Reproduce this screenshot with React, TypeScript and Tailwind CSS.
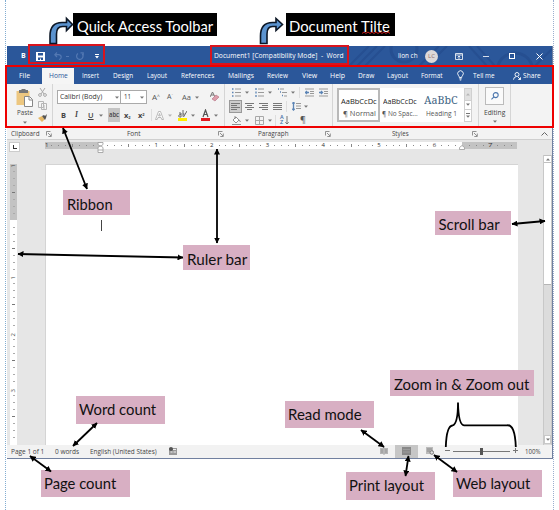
import { useLayoutEffect, useRef, useState } from 'react';
import type { ReactNode } from 'react';

/** Single line of text that is condensed or widened to fill its box. */
function Fit({ className = '', children }: { className?: string; children: ReactNode }) {
  const box = useRef<HTMLSpanElement>(null);
  const text = useRef<HTMLSpanElement>(null);
  const [scale, setScale] = useState(1);
  useLayoutEffect(() => {
    if (box.current && text.current) setScale(box.current.clientWidth / text.current.offsetWidth);
  }, []);
  return (
    <span ref={box} className={`block shrink-0 whitespace-nowrap ${className}`}>
      <span ref={text} className="inline-block origin-left" style={{ transform: `scaleX(${scale})` }}>
        {children}
      </span>
    </span>
  );
}

function Chevron({ className = '' }: { className?: string }) {
  return (
    <svg className={`h-[3px] w-[4px] shrink-0 ${className}`} viewBox="0 0 4 3">
      <path d="M0 .5h4L2 2.7z" fill="#777" />
    </svg>
  );
}

function Launcher({ className = '' }: { className?: string }) {
  return (
    <svg className={`h-[6px] w-[6px] shrink-0 ${className}`} viewBox="0 0 6 6" fill="none" stroke="#777" strokeWidth=".8">
      <path d="M.5 4.5v-4h4M2 2l3 3M5.3 2.5v3h-3" />
    </svg>
  );
}

function Lines({ className = '', d }: { className?: string; d: string }) {
  return (
    <svg className={`h-[9px] w-[9px] shrink-0 ${className}`} viewBox="0 0 9 9" stroke="#777" strokeWidth="1" fill="none">
      <path d={d} />
    </svg>
  );
}

function List({ className = '', d, marks }: { className?: string; d: string; marks: string }) {
  return (
    <svg className={`h-[9px] w-[9px] shrink-0 ${className}`} viewBox="0 0 9 9" fill="none">
      <path d={d} stroke="#999" />
      <path d={marks} stroke="#5b84b5" strokeWidth="1.3" />
    </svg>
  );
}

const tabs = [
  ['File', 'ml-[12px] w-[11px]'],
  ['Home', 'ml-[12px] w-[32px] px-[7px]'],
  ['Insert', 'ml-[8px] w-[17px]'],
  ['Design', 'ml-[14px] w-[20px]'],
  ['Layout', 'ml-[14px] w-[20px]'],
  ['References', 'ml-[14px] w-[33px]'],
  ['Mailings', 'ml-[14px] w-[26px]'],
  ['Review', 'ml-[13px] w-[21px]'],
  ['View', 'ml-[14px] w-[15px]'],
  ['Help', 'ml-[13px] w-[15px]'],
  ['Draw', 'ml-[13px] w-[16px]'],
  ['Layout', 'ml-[13px] w-[21px]'],
  ['Format', 'ml-[13px] w-[22px]'],
];

function TitleBar() {
  return (
    <div className="relative flex h-[20px] items-center overflow-hidden bg-[#2b579a] text-[7px] leading-[20px] text-white">
      <svg className="absolute left-[340px] top-0 h-[20px] w-[205px]" viewBox="0 0 205 20" fill="none" stroke="#264f91">
        <path d="M2 20 22 0M10 20 30 0M18 20 38 0M72 20 92 0M80 20 100 0M122 0l18 20M130 0l18 20M188 20 205 3" strokeWidth="2" />
        <circle cx="57" cy="3" r="13" strokeWidth="3" />
        <circle cx="168" cy="25" r="18" strokeWidth="3" />
      </svg>
      <span className="ml-[14px] w-[5px] font-bold">B</span>
      <svg className="ml-[10px] h-[9px] w-[9px] shrink-0" viewBox="0 0 9 9">
        <path d="M0 0h9v9H0z" fill="#fff" />
        <path d="M2 1h5v2.5H2zM2 5.5h5V8H5V6.5H4V8H2z" fill="#2b579a" />
      </svg>
      <svg className="ml-[9px] h-[8px] w-[8px] shrink-0" viewBox="0 0 8 8" fill="none" stroke="#5378b3" strokeWidth="1.2">
        <path d="M3 .5.8 2.7 3 5M1 2.7h3.5Q7.3 3 7.2 5.2 7 7 5 7.5" />
      </svg>
      <span className="ml-[4px] h-px w-[3px] bg-[#5378b3]" />
      <svg className="ml-[7px] h-[8px] w-[8px] shrink-0" viewBox="0 0 8 8" fill="none" stroke="#5378b3" strokeWidth="1.2">
        <path d="M2 1.5A3.2 3.2 0 1 0 6.2 2M4.5.8h2.7v2.7" />
      </svg>
      <svg className="ml-[11px] h-[5px] w-[4px] shrink-0" viewBox="0 0 4 5" fill="#fff">
        <path d="M0 0h4v1H0zM0 2h4L2 4.5z" />
      </svg>
      <Fit className="relative ml-[115px] w-[130px]">Document1 [Compatibility Mode]&nbsp; - &nbsp;Word</Fit>
      <Fit className="relative ml-[54px] w-[20px]">lion ch</Fit>
      <span className="relative ml-[7px] h-[13px] w-[13px] shrink-0 rounded-full bg-[#ddd8d8] text-center text-[6px] leading-[13px] text-[#8d6f6f]">LC</span>
      <svg className="relative ml-[17px] h-[7px] w-[8px] shrink-0" viewBox="0 0 8 7" fill="none" stroke="#fff">
        <path d="M.5.5h7v6h-7zM.5 2h7M4 6V3M2.7 4.3 4 3l1.3 1.3" strokeWidth=".8" />
      </svg>
      <span className="relative ml-[20px] h-px w-[6px] shrink-0 bg-[#d5deec]" />
      <span className="relative ml-[20px] h-[6px] w-[6px] shrink-0 border border-white" />
      <svg className="relative ml-[21px] h-[7px] w-[7px] shrink-0" viewBox="0 0 7 7" stroke="#fff" fill="none">
        <path d="m.5.5 6 6m0-6-6 6" />
      </svg>
    </div>
  );
}

function TabRow() {
  return (
    <div className="relative flex h-[18px] bg-[#2b579a] pt-[2px] text-[7px] leading-[15px] text-white">
      {tabs.map(([label, place], i) =>
        label === 'Home' ? (
          <div key={i} className={`h-[16px] shrink-0 bg-[#f5f5f5] text-[#2b579a] ${place}`}>
            <Fit className="w-[19px]">{label}</Fit>
          </div>
        ) : (
          <Fit key={i} className={place}>{label}</Fit>
        ),
      )}
      <svg className="ml-[14px] mt-[2px] h-[11px] w-[7px] shrink-0" viewBox="0 0 7 11" fill="none" stroke="#fff" strokeWidth=".9">
        <path d="M2.3 7.5Q2.3 6.3 1.3 5.3A2.8 2.8 0 1 1 5.7 5.3Q4.7 6.3 4.7 7.5zM2.3 8.8h2.4M2.8 10h1.4" />
      </svg>
      <Fit className="ml-[9px] w-[22px]">Tell me</Fit>
      <svg className="ml-[18px] mt-[4px] h-[8px] w-[8px] shrink-0" viewBox="0 0 8 8" fill="none" stroke="#fff" strokeWidth=".9">
        <circle cx="4" cy="2.5" r="2" />
        <path d="M.5 7.7Q.7 5 3 4.7M5 5l2.5 2.5M5.3 7.5h2.2V5.3" />
      </svg>
      <Fit className="ml-[2px] w-[18px]">Share</Fit>
    </div>
  );
}

function Clipboard() {
  return (
    <div className="flex w-[46px] shrink-0 border-r border-[#d5d5d5]">
      <div className="ml-[9px] flex w-[17px] flex-col items-center pt-[5px]">
        <svg className="h-[18px] w-[17px] shrink-0" viewBox="0 0 17 18">
          <path d="M.5 2h13v14H.5z" fill="#edc780" />
          <path d="M3 1h2l1-1h3l1 1h2v3H3z" fill="#777" />
          <path d="M8.500 7.500h5l3 3v7h-8z" fill="#fff" stroke="#888" />
          <path d="M13 7.500V11h3.500" fill="none" stroke="#888" />
        </svg>
        <Fit className="w-[16px] text-[7px] leading-[11px] text-[#444]">Paste</Fit>
        <Chevron className="mt-[3px]" />
      </div>
      <div className="ml-[5px] flex flex-col gap-[4px] pt-[4px]">
        <svg className="h-[9px] w-[9px]" viewBox="0 0 9 9" fill="none" stroke="#aaa">
          <path d="m2 0 4 6M7 0 3 6" />
          <circle cx="2" cy="7" r="1.4" /><circle cx="7" cy="7" r="1.4" />
        </svg>
        <svg className="h-[9px] w-[9px]" viewBox="0 0 9 9" fill="#f5f5f5" stroke="#b5b5b5">
          <path d="M.5.5h5v6h-5zM3.500 2.500h5v6h-5zM5 5h2M5 7h2" />
        </svg>
        <svg className="h-[9px] w-[9px]" viewBox="0 0 9 9">
          <path d="M0 4 4 2l3 3-3 3z" fill="#e5b866" />
          <path d="m4 2 2-1 1 1 2-2-1 4-1 2z" fill="#555" />
        </svg>
      </div>
    </div>
  );
}

function FontGroup() {
  return (
    <div className="w-[172px] shrink-0 border-r border-[#d5d5d5]">
      <div className="flex items-center pt-[6px]">
        <div className="ml-[4px] flex h-[14px] w-[64px] shrink-0 items-center border border-[#aaa] bg-white">
          <Fit className="ml-[2px] w-[42px] text-[7px] leading-[12px] text-[#333]">Calibri (Body)</Fit>
          <Chevron className="ml-[13px]" />
        </div>
        <div className="flex h-[14px] w-[26px] shrink-0 items-center border border-l-0 border-[#aaa] bg-white">
          <Fit className="ml-[3px] w-[7px] text-[7px] leading-[12px] text-[#333]">11</Fit>
          <Chevron className="ml-[9px]" />
        </div>
        <span className="ml-[5px] w-[9px] text-[8px] leading-[14px] text-[#555]">A<sup className="text-[5px]">^</sup></span>
        <span className="ml-[6px] w-[8px] text-[7px] leading-[14px] text-[#555]">A<sup className="text-[4px]">ˇ</sup></span>
        <Fit className="ml-[7px] w-[9px] text-[7.5px] leading-[14px] text-[#555]">Aa</Fit>
        <Chevron className="ml-[4px]" />
        <svg className="ml-[11px] h-[10px] w-[9px] shrink-0" viewBox="0 0 9 10" fill="none">
          <path d="M0 5 2.500 0 5 5M1 3h3" stroke="#777" /><path d="m2 7 4-4 3 2-4 4z" fill="#dc9dab" stroke="#b46d7f" strokeWidth=".6" />
        </svg>
      </div>
      <div className="mt-[4px] flex h-[14px] items-center text-[7.5px] leading-[14px] text-[#444]">
        <span className="ml-[8px] w-[5px] font-bold">B</span>
        <span className="ml-[9px] w-[4px] font-['Liberation_Serif'] font-bold italic">I</span>
        <span className="ml-[9px] w-[5px] font-semibold underline">U</span>
        <Chevron className="ml-[6px]" />
        <div className="ml-[5px] flex h-[14px] w-[12px] shrink-0 justify-center bg-[#c5c5c5]">
          <Fit className="w-[10px] text-[6.5px] font-semibold line-through">abc</Fit>
        </div>
        <span className="ml-[4px] w-[8px] whitespace-nowrap font-bold">x<sub className="text-[4px]">2</sub></span>
        <span className="ml-[6px] w-[7px] whitespace-nowrap font-bold">x<sup className="text-[4px]">2</sup></span>
        <span className="ml-[6px] h-[12px] w-px bg-[#ddd]" />
        <svg className="ml-[3px] h-[9px] w-[9px] shrink-0" viewBox="0 0 9 9" fill="#fff" stroke="#aaa" strokeWidth=".8">
          <path d="M.5 8.500 3.500.5h2l3 8H6.800L6 6.500H3l-.8 2zM3.600 5h1.800L4.500 2.500z" />
        </svg>
        <Chevron className="ml-[4px] opacity-50" />
        <svg className="ml-[6px] h-[12px] w-[9px] shrink-0" viewBox="0 0 9 12" fill="none">
          <path d="M0 9h9v3H0z" fill="#ffed00" /><path d="M1 4h2v4H1.300A1.200 1.200 0 0 1 3 5.800M5 1v6.500M5 5h1.500M5.500 8 9 2" stroke="#666" />
        </svg>
        <Chevron className="ml-[4px]" />
        <svg className="ml-[6px] h-[12px] w-[9px] shrink-0" viewBox="0 0 9 12" fill="none">
          <path d="M0 9h9v3H0z" fill="#e21b22" /><path d="M2 8 4.500 1 7 8M3 5.500h3" stroke="#555" strokeWidth="1.200" />
        </svg>
        <Chevron className="ml-[4px]" />
      </div>
    </div>
  );
}

function ParagraphGroup() {
  return (
    <div className="w-[108px] shrink-0 border-r border-[#d5d5d5] pt-[3px]">
      <div className="flex h-[10px] items-center">
        <List className="ml-[7px]" d="M3 1h6M3 4.500h6M3 8h6" marks="M0 1h1.500M0 4.500h1.500M0 8h1.500" />
        <Chevron className="ml-[4px]" />
        <List className="ml-[6px]" d="M3 1h6M3 4.500h6M3 8h6" marks="M1 0v2M1 3.500v2M1 7v2" />
        <Chevron className="ml-[4px]" />
        <List className="ml-[6px]" d="M2 1h4M4 4.500h5M6 8h3" marks="M0 1h1M2 4h1M4 7.500h1" />
        <Chevron className="ml-[4px]" />
        <span className="ml-[4px] h-[11px] w-px bg-[#ddd]" />
        <List className="ml-[5px]" d="M0 1h9M5 3.500h4M5 5.500h4M0 8h9" marks="M4 4.500H.5M2 3 .5 4.500 2 6" />
        <List className="ml-[5px]" d="M0 1h9M5 3.500h4M5 5.500h4M0 8h9" marks="M0 4.500h3.500M2 3l1.500 1.500L2 6" />
      </div>
      <div className="mt-[3px] flex h-[13px] items-center">
        <div className="ml-[4px] flex h-[13px] w-[13px] shrink-0 items-center justify-center border border-[#999] bg-[#cdcdcd]">
          <Lines d="M0 1.500h9M0 3.500h6M0 5.500h9M0 7.500h6" />
        </div>
        <Lines className="ml-[3px]" d="M0 1.500h9M2 3.500h5M0 5.500h9M2 7.500h5" />
        <Lines className="ml-[5px]" d="M0 1.500h9M3 3.500h6M0 5.500h9M3 7.500h6" />
        <Lines className="ml-[5px]" d="M0 1.500h9M0 3.500h9M0 5.500h9M0 7.500h9" />
        <span className="ml-[4px] h-[11px] w-px bg-[#ddd]" />
        <List className="ml-[5px]" d="M4 1.500h5M4 4h5M4 6.500h5" marks="M1.500 0v8M.3 1.500 1.500.3l1.200 1.200M.3 6.800l1.200 1.200 1.200-1.200" />
        <Chevron className="ml-[3px]" />
      </div>
      <div className="mt-px flex h-[12px] items-center">
        <svg className="ml-[7px] h-[9px] w-[9px] shrink-0" viewBox="0 0 9 9" fill="#fff" stroke="#777" strokeWidth=".8">
          <path d="m1 4 3-3 3 3-3 3zM3 3V0M7 4q2 1 1 2M0 8.500h9" />
        </svg>
        <Chevron className="ml-[4px]" />
        <Lines className="ml-[6px] opacity-60" d="M.5.5h8v8h-8zM4.500.5v8M.5 4.500h8" />
        <Chevron className="ml-[4px]" />
        <span className="ml-[3px] h-[11px] w-px bg-[#ddd]" />
        <div className="ml-[4px] w-[5px] text-[5.5px] font-semibold leading-[5px] text-[#456fa8]">A<br />Z</div>
        <Lines className="-ml-px" d="M3 0v8M1.300 6.300 3 8l1.700-1.700" />
        <span className="ml-[7px] text-[9px] leading-[12px] text-[#555]">¶</span>
      </div>
    </div>
  );
}

function StylesGroup() {
  return (
    <div className="flex w-[146px] shrink-0 border-r border-[#d5d5d5] pt-[4px]">
      <div className="ml-[4px] flex h-[34px] w-[135px] bg-white text-[7px]">
        <div className="h-[34px] w-[43px] shrink-0 border-2 border-[#b9b9b9] pl-[2px] pt-[5px] text-[#222]">
          <Fit className="w-[36px] text-[7.5px] leading-[12px]">AaBbCcDc</Fit>
          <Fit className="ml-[2px] mt-[2px] w-[33px] leading-[10px] text-[#555]">¶ Normal</Fit>
        </div>
        <div className="ml-[3px] w-[36px] shrink-0 pt-[7px] text-[#222]">
          <Fit className="w-[34px] text-[7.5px] leading-[12px]">AaBbCcDc</Fit>
          <Fit className="-ml-px mt-[2px] w-[36px] leading-[10px] text-[#555]">¶ No Spac...</Fit>
        </div>
        <div className="ml-[5px] w-[35px] shrink-0 pt-[5px]">
          <Fit className="w-[34px] font-['Noto_Serif','Noto_Sans',serif] text-[11px] leading-[14px] text-[#3f6685]">AaBbC</Fit>
          <Fit className="ml-[2px] mt-[2px] w-[31px] leading-[10px] text-[#555]">Heading 1</Fit>
        </div>
        <div className="ml-[5px] flex w-[8px] flex-col border border-[#d0d0d0]">
          <span className="flex h-[11px] items-center justify-center bg-[#e1e1e1]"><Chevron className="rotate-180 opacity-40" /></span>
          <span className="flex h-[11px] items-center justify-center border-y border-[#d0d0d0]"><Chevron /></span>
          <span className="flex h-[11px] flex-col items-center justify-center"><span className="mb-px h-px w-[4px] bg-[#777]" /><Chevron /></span>
        </div>
      </div>
    </div>
  );
}

function Editing() {
  return (
    <div className="flex w-[32px] shrink-0 flex-col items-center border-r border-[#d5d5d5] pt-[3px]">
      <div className="flex h-[18px] w-[19px] items-center justify-center border border-[#bbb] bg-[#fafafa]">
        <svg className="h-[8px] w-[8px]" viewBox="0 0 9 9" fill="none" stroke="#4b76ad" strokeWidth="1.200">
          <circle cx="5.300" cy="3.500" r="2.800" /><path d="M3.300 5.500.5 8.300" />
        </svg>
      </div>
      <Fit className="mt-[2px] w-[21px] text-[7px] leading-[11px] text-[#444]">Editing</Fit>
      <Chevron className="mt-[2px]" />
    </div>
  );
}

function Ribbon() {
  return (
    <div className="h-[56px] border-b border-[#cfcfcf] bg-[#f3f3f3]">
      <div className="flex h-[44px]">
        <Clipboard /><FontGroup /><ParagraphGroup /><StylesGroup /><Editing />
      </div>
      <div className="flex h-[11px] items-center text-[6.5px] leading-[11px] text-[#444]">
        <Fit className="ml-[4px] w-[29px]">Clipboard</Fit>
        <Launcher className="ml-[6px]" />
        <Fit className="ml-[75px] w-[14px]">Font</Fit>
        <Launcher className="ml-[77px]" />
        <Fit className="ml-[34px] w-[31px]">Paragraph</Fit>
        <Launcher className="ml-[36px]" />
        <Fit className="ml-[61px] w-[17px]">Styles</Fit>
        <Launcher className="ml-[63px]" />
        <svg className="ml-[63px] h-[4px] w-[7px] shrink-0" viewBox="0 0 7 4" fill="none" stroke="#666"><path d="m.5 3.500 3-3 3 3" /></svg>
      </div>
    </div>
  );
}

const eighths = [1, 2, 3, 4, 5, 6, 7];

function Inch({ label, gray = false, flush = false }: { label: string; gray?: boolean; flush?: boolean }) {
  return (
    <div className={`flex h-[7px] w-[55.7px] shrink-0 items-center ${gray ? 'bg-[#c3c3c3]' : 'bg-white'}`}>
      <span className="flex w-[3.48px] shrink-0 justify-start text-[6px] leading-[7px] text-[#333]">
        <span className={flush ? 'font-medium' : '-ml-[2px] font-medium'}>{label}</span>
      </span>
      {eighths.map((n) => (
        <span key={n} className="flex w-[6.96px] shrink-0 justify-center">
          <span className={n === 4 ? 'h-[3px] w-px bg-[#888]' : 'h-px w-px bg-[#888]'} />
        </span>
      ))}
    </div>
  );
}

function VInch({ label, gray = false }: { label: string; gray?: boolean }) {
  return (
    <div className={`flex w-[7px] shrink-0 flex-col items-center ${gray ? 'h-[56px] bg-[#c3c3c3]' : 'h-[56.3px] bg-white'}`}>
      <span className="h-[3.5px] shrink-0 -rotate-90 text-[6px] font-medium leading-[3.5px] text-[#444]">{label}</span>
      {eighths.map((n) => (
        <span key={n} className="flex h-[7.03px] shrink-0 items-center">
          <span className={n === 4 ? 'h-px w-[3px] bg-[#777]' : 'h-px w-[2px] bg-[#aaa]'} />
        </span>
      ))}
    </div>
  );
}

function Workspace() {
  return (
    <div className="flex h-[305px] flex-col bg-[#e6e6e6]">
      <div className="flex h-[13px] shrink-0 pt-[2px]">
        <div className="ml-[2px] flex h-[10px] w-[11px] shrink-0 items-center justify-center border border-[#ccc] bg-white">
          <span className="h-[4px] w-[4px] border-b border-l border-[#333]" />
        </div>
        <div className="relative ml-[25px] flex h-[7px] w-[472px] overflow-hidden">
          <Inch label="1" gray flush /><Inch label="" /><Inch label="1" /><Inch label="2" /><Inch label="3" />
          <Inch label="4" /><Inch label="5" /><Inch label="6" />
          <div className="absolute left-[417px] top-0 h-[7px] w-[55px] bg-[#c3c3c3]">
            <Fit className="ml-[26px] w-[4px] text-[6px] font-medium leading-[7px] text-[#333]">7</Fit>
            <svg className="absolute left-0 top-0 h-[7px] w-[55px]" viewBox="0 0 55 7" stroke="#888" strokeWidth="1">
              <path d="M7 3.500h1M14 3.500h1M21 3.500h1M35 3.500h1M42 3.500h1M49 3.500h1" />
            </svg>
          </div>
        </div>
      </div>
      <div className="flex min-h-0 flex-1">
        <div className="ml-[3px] mt-[11px] h-[281px] w-[7px] shrink-0 overflow-hidden">
          <VInch label="1" gray /><VInch label="" /><VInch label="1" /><VInch label="2" /><VInch label="3" />
        </div>
        <div className="ml-[28px] mt-[11px] h-[281px] w-[473px] shrink-0 border-l border-t border-[#d4d4d4] bg-white pl-[55px] pt-[55px]">
          <div className="h-[11px] w-px bg-[#444]" />
        </div>
        <div className="ml-[25px] mt-[2px] flex w-[9px] shrink-0 flex-col border-x border-[#c8c8c8] bg-[#dcdcdc]">
          <span className="flex h-[8px] shrink-0 items-center justify-center border-y border-[#c0c0c0] bg-white"><Chevron className="rotate-180" /></span>
          <span className="h-[122px] border-b border-[#b5b5b5] bg-white" />
          <span className="mb-px mt-auto flex h-[9px] items-center justify-center border border-[#c8c8c8] bg-white"><Chevron /></span>
        </div>
      </div>
    </div>
  );
}

function StatusBar() {
  return (
    <div className="flex h-[13px] items-center bg-[#f2f2f2] text-[6.5px] leading-[13px] text-[#444]">
      <Fit className="ml-[4px] w-[33px]">Page 1 of 1</Fit>
      <Fit className="ml-[11px] w-[24px]">0 words</Fit>
      <Fit className="ml-[11px] w-[67px]">English (United States)</Fit>
      <svg className="-mt-[2px] ml-[12px] h-[8px] w-[8px] shrink-0" viewBox="0 0 8 8"><path d="M0 1h8v7H0z" fill="#999" /><circle cx="2" cy="2" r="2" fill="#555" /><path d="M4 2.500h3M1.500 5h2M4.500 5H7" stroke="#eee" /></svg>
      <svg className="-mt-[2px] ml-[203px] h-[8px] w-[8px] shrink-0" viewBox="0 0 8 8"><path d="M0 1h3.600v6H0zM4.400 1H8v6H4.400z" fill="#b5b5b5" /><path d="M4 0v8M1 3h2M5 3h2M1 5h2M5 5h2" stroke="#888" strokeWidth=".7" /></svg>
      <div className="ml-[7px] flex h-[13px] w-[23px] shrink-0 items-center justify-center bg-[#c6c6c6]">
        <svg className="-mt-[2px] h-[8px] w-[9px]" viewBox="0 0 9 8"><path d="M0 0h9v8H0z" fill="#888" /><path d="M1 2.500h7M1 5h7" stroke="#9b9b9b" /></svg>
      </div>
      <svg className="-mt-[2px] ml-[8px] h-[8px] w-[8px] shrink-0" viewBox="0 0 8 8"><path d="M0 0h7v7H0z" fill="#bbb" /><path d="M1 2h5M1 4h3" stroke="#888" /><circle cx="5.800" cy="5.500" r="1.800" fill="#ddd" stroke="#777" /></svg>
      <span className="-mt-[2px] ml-[11px] h-px w-[5px] bg-[#777]" />
      <div className="ml-[3px] flex h-[7px] w-[57px] shrink-0 items-center">
        <span className="h-px w-[27px] bg-[#777]" /><span className="h-[7px] w-[3px] bg-[#555]" /><span className="h-px w-[27px] bg-[#777]" />
      </div>
      <svg className="-mt-[2px] ml-[3px] h-[5px] w-[5px] shrink-0" viewBox="0 0 5 5" stroke="#777"><path d="M0 2.500h5M2.500 0v5" /></svg>
      <Fit className="ml-[7px] w-[16px]">100%</Fit>
    </div>
  );
}

const notes = [
  ['Ribbon', 'left-[63px] top-[190px] h-[25px] w-[67px] pl-[3.5px] leading-[28px]', 'w-[46px]'],
  ['Ruler bar', 'left-[183px] top-[245px] h-[25px] w-[67px] pl-[3.5px] leading-[28px]', 'w-[60px]'],
  ['Scroll bar', 'left-[435px] top-[211px] h-[24px] w-[76px] pl-[3.5px] leading-[27px]', 'w-[61px]'],
  ['Word count', 'left-[76px] top-[396px] h-[28px] w-[89px] pl-[3px] leading-[27px]', 'w-[77px]'],
  ['Page count', 'left-[41px] top-[470px] h-[27px] w-[89px] pl-[3px] leading-[27px]', 'w-[72px]'],
  ['Read mode', 'left-[285px] top-[401px] h-[27px] w-[89px] pl-[3px] leading-[27px]', 'w-[74px]'],
  ['Zoom in & Zoom out', 'left-[390px] top-[370px] h-[26px] w-[144px] pl-[4px] leading-[28px]', 'w-[135px]'],
  ['Print layout', 'left-[346px] top-[472px] h-[28px] w-[89px] pl-[3px] leading-[27px]', 'w-[75px]'],
  ['Web layout', 'left-[453px] top-[470px] h-[27px] w-[89px] pl-[3px] leading-[27px]', 'w-[74px]'],
];

const arrows = [
  [63, 128, 87, 189], [18, 254, 183, 257.5], [217, 149, 217, 243], [512, 224, 545, 221], [97, 423, 73, 446],
  [30, 456, 51, 471.5], [361, 430, 384, 447], [408.5, 456, 405.5, 476], [434, 455, 457, 472],
];

function Annotations() {
  return (
    <>
      <div className="absolute left-[28px] top-[44px] h-[20px] w-[77px] border-2 border-[#d9141e]" />
      <div className="absolute left-[210px] top-[45px] h-[20px] w-[139px] border-2 border-[#d9141e]" />
      <div className="absolute left-[5px] top-[65px] h-[63px] w-[549px] border-2 border-[#ee0000]" />
      <div className="absolute left-[73px] top-[13px] h-[23px] w-[144px] bg-black pl-[3.5px] font-['Lato'] text-[15px] leading-[27px] text-white">
        <Fit className="w-[136px]">Quick Access Toolbar</Fit>
      </div>
      <div className="absolute left-[286px] top-[13px] h-[23px] w-[109px] bg-black pl-[3px] font-['Lato'] text-[15px] leading-[27px] text-white">
        <Fit className="w-[101px]">Document Tilte</Fit>
      </div>
      {notes.map(([label, place, width]) => (
        <div key={label} className={`absolute bg-[#d8afc3] font-['Lato'] text-[15px] text-[#111] ${place}`}>
          <Fit className={width}>{label}</Fit>
        </div>
      ))}
      <svg className="absolute left-0 top-0 h-[510px] w-[559px]" viewBox="0 0 559 510" fill="none">
        <defs>
          <marker id="head" viewBox="0 0 6 6" refX="5.500" refY="3" markerWidth="6" markerHeight="6" markerUnits="userSpaceOnUse" orient="auto-start-reverse">
            <path d="M0 0 6 3 0 6z" fill="#000" />
          </marker>
        </defs>
        {arrows.map(([x1, y1, x2, y2]) => (
          <line key={`${x1}-${y1}`} x1={x1} y1={y1} x2={x2} y2={y2} stroke="#000" strokeWidth="1.800" markerStart="url(#head)" markerEnd="url(#head)" />
        ))}
        <path d="M50 43.500V36Q50 22.500 62 22.500h4.500V18.500l6 6-6 6v-4h-4Q56.500 26.500 56.500 34v9.500z" fill="#5b93cf" stroke="#0b1625" strokeWidth="1.600" />
        <path d="M260.500 43.500V36Q260.500 22.500 272.500 22.500h3.500V18.500l6.500 6-6.500 6v-4h-3.500Q267 26.500 267 34v9.500z" fill="#5b93cf" stroke="#0b1625" strokeWidth="1.600" />
        <path d="m362 33.500 2-1.500 2 1.500 2-1.500 2 1.500 2-1.500 2 1.500 2-1.500 2 1.500 2-1.500 2 1.500 2-1.500 2 1.500 2-1.500 2 1.500" stroke="#e02020" strokeWidth=".9" />
        <path d="M445.800 447Q446.500 426 452.500 425.500 458 424 458 402.500 458.500 425 464 425.300H507Q515 424 515.800 447" stroke="#000" strokeWidth="1.800" />
        <path d="M98 142.500h5v2l-2.500 2-2.500-2zM98 149.500v-2l2.500-2 2.500 2v5h-5zM98 150h5M459.500 149.500v-2l2.500-2 2.500 2v2z" fill="#fff" stroke="#999" strokeWidth=".8" />
      </svg>
    </>
  );
}

export default function App() {
  return (
    <div className="relative h-[510px] w-[559px] overflow-hidden bg-white font-['Open_Sans','Noto_Sans',sans-serif]">
      <div className="absolute left-[5px] top-0 h-[510px] border-l border-dotted border-[#82add2]" />
      <div className="absolute left-[553px] top-0 h-[510px] border-l border-dotted border-[#9cafcf]" />
      <div className="pl-[7px] pt-[46px]">
        <div className="relative w-[546px] border-b border-r border-[#71809f]">
          <TitleBar />
          <TabRow />
          <Ribbon />
          <Workspace />
          <StatusBar />
        </div>
      </div>
      <Annotations />
    </div>
  );
}
